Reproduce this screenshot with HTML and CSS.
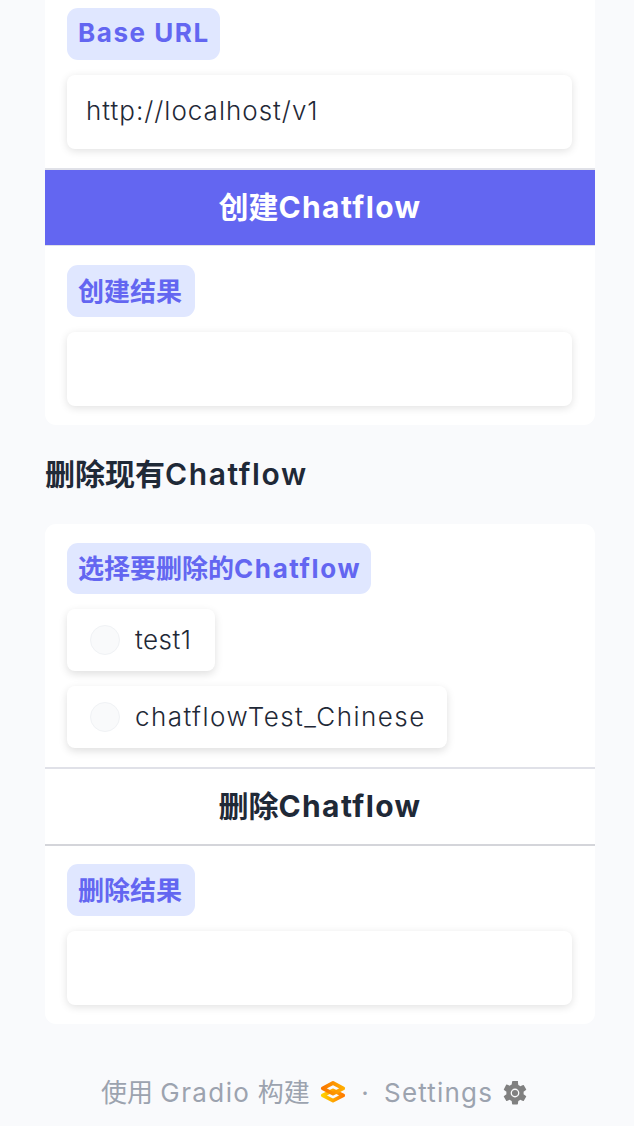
FILE: index.html
```html
<!DOCTYPE html>
<html lang="zh-CN">
<head>
<meta charset="utf-8">
<meta name="viewport" content="width=device-width, initial-scale=1">
<title>Chatflow</title>
<link rel="stylesheet" href="styles.css">
</head>
<body>
<main class="page">
  <section class="card card-create">
    <div class="block block-url">
      <label class="label label-url" for="base-url"><span class="base-label">Base URL</span></label>
      <input class="field" id="base-url" type="text" value="http://localhost/v1">
    </div>
    <button class="action action-primary">创建<span class="action-latin">Chatflow</span></button>
    <div class="block">
      <label class="label" for="create-result">创建结果</label>
      <input class="field" id="create-result" type="text">
    </div>
  </section>

  <h2 class="heading">删除现有<span class="heading-latin">Chatflow</span></h2>

  <section class="card">
    <div class="block block-choice">
      <div class="label label-choice">选择要删除的<span class="label-latin">Chatflow</span></div>
      <div class="choices">
        <div class="choice choice-short"><span class="radio"></span><span class="name-short">test1</span></div>
        <div class="choice choice-long"><span class="radio"></span><span class="name-long">chatflowTest_Chinese</span></div>
      </div>
    </div>
    <button class="action action-secondary">删除<span class="action-latin">Chatflow</span></button>
    <div class="block block-last">
      <label class="label" for="delete-result">删除结果</label>
      <input class="field" id="delete-result" type="text">
    </div>
  </section>

  <footer class="footer">
    <span class="built">使用 <span class="gradio">Gradio</span> 构建</span>
    <svg class="logo" viewBox="0 0 26 24" aria-hidden="true">
      <defs>
        <linearGradient id="top" x1="0" y1="0" x2="1" y2="0"><stop offset="0" stop-color="#f97700"/><stop offset="1" stop-color="#ffad00"/></linearGradient>
        <linearGradient id="bottom" x1="0" y1="0" x2="1" y2="0"><stop offset="0" stop-color="#ffd000"/><stop offset="1" stop-color="#ff7c00"/></linearGradient>
      </defs>
      <path d="M2.8 15.4 13 10.4 23.2 15.4 13 20.6Z" fill="none" stroke="url(#bottom)" stroke-width="3.8" stroke-linejoin="round"/>
      <path d="M2.8 8.4 13 3 23.2 8.4 13 13.6Z" fill="none" stroke="url(#top)" stroke-width="3.8" stroke-linejoin="round"/>
    </svg>
    <span class="dot">·</span>
    <span class="settings">Settings</span>
    <svg class="gear" viewBox="2 2 20 20" aria-hidden="true">
      <path fill="#808080" d="M19.14 12.94c.04-.3.06-.61.06-.94 0-.32-.02-.64-.07-.94l2.03-1.58a.49.49 0 0 0 .12-.61l-1.92-3.32a.49.49 0 0 0-.59-.22l-2.39.96a7 7 0 0 0-1.62-.94l-.36-2.54A.48.48 0 0 0 13.92 2h-3.84a.48.48 0 0 0-.48.41l-.36 2.54c-.59.24-1.13.57-1.62.94l-2.39-.96a.49.49 0 0 0-.59.22L2.74 8.87a.48.48 0 0 0 .12.61l2.03 1.58c-.05.3-.09.63-.09.94s.02.64.07.94l-2.03 1.58a.49.49 0 0 0-.12.61l1.92 3.32c.12.22.37.29.59.22l2.39-.96c.5.38 1.03.7 1.62.94l.36 2.54c.05.24.24.41.48.41h3.84c.24 0 .44-.17.47-.41l.36-2.54a7 7 0 0 0 1.62-.94l2.39.96c.22.08.47 0 .59-.22l1.92-3.32a.48.48 0 0 0-.12-.61z"/>
      <circle cx="12" cy="12" r="3.1" fill="none" stroke="#f9fafb" stroke-width="1.1"/>
    </svg>
  </footer>
</main>
</body>
</html>
```
FILE: styles.css
```css
* { box-sizing: border-box; }

body {
  margin: 0;
  background: #f9fafc;
  color: #1f2937;
  font-family: Inter, "Noto Sans CJK SC", sans-serif;
}

.page {
  display: flow-root;
  width: 550px;
  height: 1126px;
  margin-left: 45px;
  overflow: clip;
  overflow-clip-margin: 20px;
}

.card {
  background: #fff;
  border-radius: 11px;
  overflow: hidden;
}

.card-create { border-radius: 0 0 11px 11px; }

.block { padding: 19px 23px 19px 22px; }
.block-url { padding-top: 8px; }
.block-last { padding-top: 18px; }

.label {
  display: flex;
  align-items: center;
  width: fit-content;
  height: 52px;
  margin-bottom: 15px;
  padding: 1px 13px 0 11px;
  border-radius: 11px;
  background: #e0e7ff;
  color: #6366f1;
  font-size: 26px;
  font-weight: 700;
  line-height: 1;
  white-space: nowrap;
}

.label-url { width: 153px; padding-top: 0; padding-bottom: 2px; }
.label-choice { width: 304px; height: 51px; padding-top: 0; }

.base-label { letter-spacing: 1.55px; }
.label-latin { letter-spacing: 1.6px; }
.action-latin { letter-spacing: 1.4px; }
.heading-latin { letter-spacing: 1.6px; }
.name-short { letter-spacing: 0.5px; }
.name-long { letter-spacing: 1.45px; }
.gradio { letter-spacing: 1.4px; }

.field {
  display: block;
  width: 505px;
  height: 74px;
  padding: 0 19px 3px;
  border: 0;
  border-radius: 8px;
  background: #fff;
  box-shadow: 0 2px 8px rgb(0 0 0 / 12%);
  color: #1f2937;
  font: 300 26px Inter, "Noto Sans CJK SC", sans-serif;
  letter-spacing: 1px;
  outline: none;
}

.action {
  display: flex;
  align-items: center;
  justify-content: center;
  width: 100%;
  padding: 0 0 2px;
  border: solid #e0e1e8;
  font: 700 30px/1 Inter, "Noto Sans CJK SC", sans-serif;
}

.action-primary {
  height: 78px;
  border-width: 2px 0 1px;
  background: #6366f1;
  color: #fff;
}

.action-secondary {
  height: 79px;
  border-width: 2px 0;
  border-bottom-color: #d4d5da;
  background: #fff;
  color: #1f2937;
}

.heading {
  display: flex;
  align-items: center;
  height: 99px;
  margin: 0;
  padding-bottom: 2px;
  font-size: 30px;
  font-weight: 600;
  line-height: 1;
}

.choices {
  display: flex;
  flex-direction: column;
  gap: 15px;
}

.choice {
  display: flex;
  align-items: center;
  gap: 15px;
  height: 62px;
  padding: 0 23px;
  border-radius: 8px;
  background: #fff;
  box-shadow: 0 3px 9px rgb(0 0 0 / 13%);
  font-size: 26px;
  font-weight: 300;
  line-height: 30px;
  white-space: nowrap;
}

.choice-short { width: 148px; }
.choice-long { width: 380px; }

.radio {
  flex: none;
  width: 30px;
  height: 30px;
  border: 1px solid #f0f2f5;
  border-radius: 50%;
  background: #f9fafb;
}

.footer {
  display: flex;
  align-items: center;
  height: 36px;
  margin: 51px 0 0 56px;
  color: #9ca3af;
  font-size: 26px;
  line-height: 1;
  white-space: nowrap;
}

.built { width: 219px; }
.logo { width: 26px; height: 24px; margin-bottom: 2px; }
.dot { width: 38px; text-align: center; }
.settings { width: 119px; letter-spacing: 1.2px; }
.gear { width: 24px; height: 24px; }
```
